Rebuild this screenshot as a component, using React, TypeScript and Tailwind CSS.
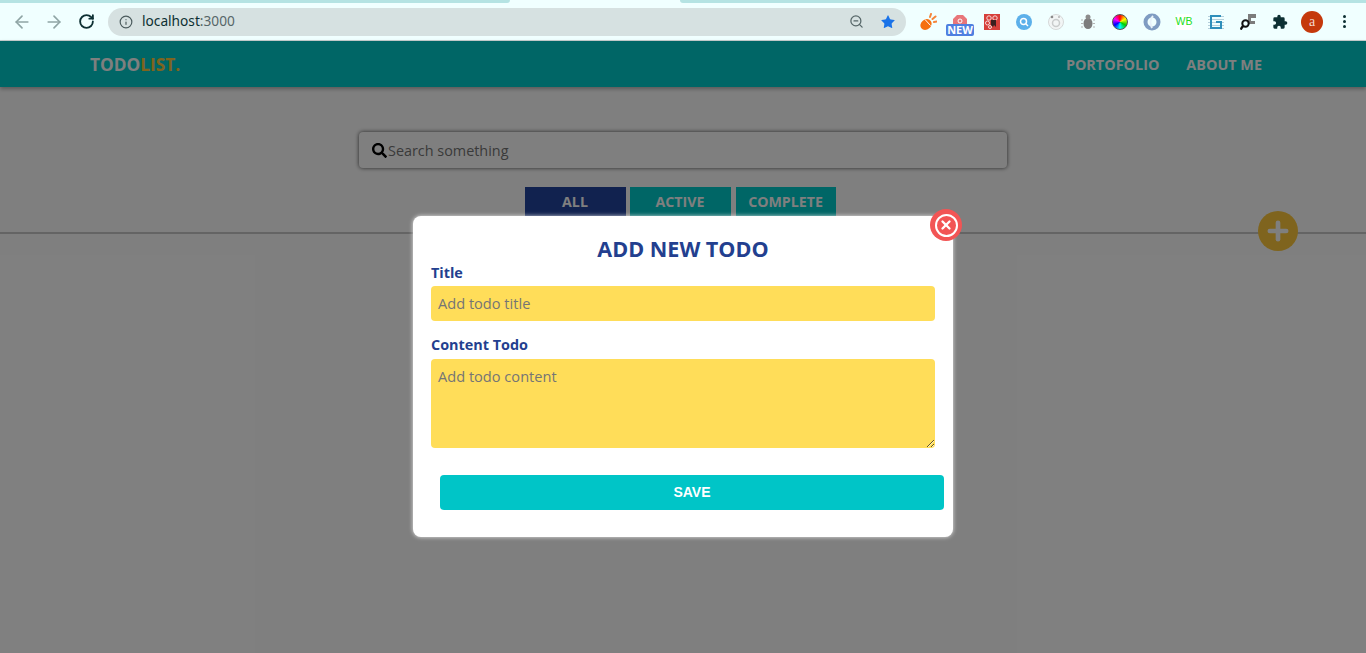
import { ArrowLeft, ArrowRight, Info, Plus, RotateCw, Star, X, ZoomOut } from "lucide-react";
import { FaSearch } from "react-icons/fa";

const FILTERS = [
  { label: "ALL", className: "w-[101px] bg-[#22449f]" },
  { label: "ACTIVE", className: "w-[101px] bg-[#00cccc]" },
  { label: "COMPLETE", className: "ml-px w-[100px] bg-[#00cccc]" },
];

function Extensions() {
  return (
    <div className="flex items-center pl-[6px]">
      <div className="flex w-8 justify-center">
        <svg width="18" height="18" viewBox="0 0 18 18">
          <ellipse cx="7" cy="11.5" rx="6" ry="5" transform="rotate(-40 7 11.5)" fill="#f5700f" />
          <path d="M6 6.5l5.5 6" stroke="#fff" strokeWidth="1" />
          <path d="M11 4l1-3M13.5 6l3-2.5M15 9l3-.5" stroke="#f5843a" strokeWidth="2" strokeLinecap="round" />
        </svg>
      </div>
      <div className="relative flex h-7 w-8 justify-center">
        <svg width="18" height="14" viewBox="0 0 18 14" className="mt-[6px]">
          <path d="M2 14V5l4-4h6l4 4v9z" fill="#e8767a" />
          <circle cx="9" cy="7" r="2" fill="none" stroke="#fff" />
        </svg>
        <span className="absolute left-[2px] top-[16px] flex h-[12px] w-[28px] items-center justify-center rounded-[2px] bg-[#4f7fe0] font-['Open_Sans',sans-serif] text-[11px] font-bold leading-none text-white">
          NEW
        </span>
      </div>
      <div className="flex w-8 justify-center">
        <svg width="16" height="16" viewBox="0 0 16 16">
          <rect width="16" height="16" fill="#d63f3a" />
          <circle cx="5" cy="4" r="2.2" fill="none" stroke="#f7d8d8" />
          <circle cx="11" cy="4" r="2.2" fill="none" stroke="#f7d8d8" />
          <circle cx="3.5" cy="9" r="2" fill="none" stroke="#f7d8d8" />
          <circle cx="6" cy="13" r="1.5" fill="none" stroke="#f7d8d8" />
          <path d="M7 6h5v7l-2-2-1 2-2-2z" fill="#3a2020" />
        </svg>
      </div>
      <div className="flex w-8 justify-center">
        <svg width="16" height="16" viewBox="0 0 16 16">
          <circle cx="8" cy="8" r="8" fill="#5cb0ea" />
          <circle cx="7.5" cy="7.5" r="3" fill="none" stroke="#fff" strokeWidth="1.5" />
          <path d="M10 10l2 2" stroke="#fff" strokeWidth="1.5" />
        </svg>
      </div>
      <div className="flex w-8 justify-center">
        <svg width="16" height="16" viewBox="0 0 16 16">
          <circle cx="8" cy="8" r="7.5" fill="#f2f5f5" stroke="#d5d8d8" />
          <circle cx="8" cy="9" r="3.5" fill="none" stroke="#c9cccc" strokeWidth="1.5" />
          <circle cx="4" cy="3" r="1.3" fill="#8a8a8a" />
          <circle cx="11" cy="3" r="1" fill="#b5b5b5" />
        </svg>
      </div>
      <div className="flex w-8 justify-center">
        <svg width="16" height="16" viewBox="0 0 16 16">
          <ellipse cx="8" cy="9.5" rx="4.5" ry="5.5" fill="#7d7d7d" />
          <circle cx="8" cy="3" r="2.5" fill="#8c8c8c" />
          <path d="M1 6h2M1 9.5h2M1 13h2M13 6h2M13 9.5h2M13 13h2" stroke="#b5b5b5" strokeWidth="1" />
        </svg>
      </div>
      <div className="flex w-8 justify-center">
        <div className="h-4 w-4 rounded-full border border-[#555] bg-[conic-gradient(#f00,#ff0,#0c0,#0ff,#00f,#f0f,#f00)]" />
      </div>
      <div className="flex w-8 justify-center">
        <svg width="18" height="18" viewBox="0 0 18 18">
          <circle cx="9" cy="9" r="6.5" fill="none" stroke="#7f9cc2" strokeWidth="4" />
          <path d="M10 3c-3 3-3 8-1 12" stroke="#e8f2fa" strokeWidth="2" fill="none" />
        </svg>
      </div>
      <div className="flex w-8 justify-center">
        <span className="flex h-4 w-4 items-center justify-center bg-white font-['Liberation_Sans',sans-serif] text-[10.5px] leading-none text-[#22e022]">
          WB
        </span>
      </div>
      <div className="flex w-8 justify-center">
        <svg width="16" height="16" viewBox="0 0 16 16" fill="none" stroke="#2f8fbb" strokeWidth="2">
          <path d="M0 2.5h16M0 5.5h16M0 8.5h16M0 11.5h16M0 14.5h16" stroke="#b5cfdb" strokeWidth="1" />
          <path d="M13 2H3v12h10V8H8" />
        </svg>
      </div>
      <div className="flex w-8 justify-center">
        <svg width="16" height="16" viewBox="0 0 16 16">
          <path d="M8 0h8v4h-5v3h4v3H8z" fill="#7c7c7c" />
          <circle cx="5.5" cy="9.5" r="3.2" fill="none" stroke="#111" strokeWidth="2" />
          <path d="M3 12l-2.5 3.5" stroke="#111" strokeWidth="2.4" />
        </svg>
      </div>
      <div className="flex w-8 justify-center">
        <svg width="16" height="16" viewBox="0 0 24 24" fill="#0d3033">
          <path d="M20.5 11H19V7a2 2 0 0 0-2-2h-4V3.5a2.5 2.5 0 0 0-5 0V5H4a2 2 0 0 0-2 2v3.8h1.5a2.7 2.7 0 0 1 0 5.4H2V20a2 2 0 0 0 2 2h3.8v-1.5a2.7 2.7 0 0 1 5.4 0V22H17a2 2 0 0 0 2-2v-4h1.5a2.5 2.5 0 0 0 0-5z" />
        </svg>
      </div>
      <div className="flex w-8 justify-center">
        <span className="flex h-[22px] w-[22px] items-center justify-center rounded-full bg-[#c5390c] font-['Liberation_Serif',serif] text-sm leading-none text-[#f3d9cf]">
          a
        </span>
      </div>
      <div className="flex w-8 flex-col items-center gap-[2px]">
        <span className="h-[3px] w-[3px] rounded-full bg-[#0d3033]" />
        <span className="h-[3px] w-[3px] rounded-full bg-[#0d3033]" />
        <span className="h-[3px] w-[3px] rounded-full bg-[#0d3033]" />
      </div>
    </div>
  );
}

function BrowserBar() {
  return (
    <div className="h-[41px] shrink-0 border-b border-[#c8d0d0] bg-[#f0ffff]">
      <div className="flex h-[3px] justify-between bg-[#f0ffff]">
        <div className="w-[510px] rounded-br-md bg-[#b5e3e3]" />
        <div className="w-[686px] rounded-bl-md bg-[#b5e3e3]" />
      </div>
      <div className="flex h-[37px] items-center">
        <div className="flex w-[108px] items-center pl-[12px]">
          <ArrowLeft size={20} strokeWidth={2} className="text-[#8fa5a5]" />
          <ArrowRight size={20} strokeWidth={2} className="ml-[12px] text-[#8fa5a5]" />
          <RotateCw size={17} strokeWidth={2.6} className="ml-[14px] text-[#0d3033]" />
        </div>
        <div className="flex h-[28px] w-[798px] items-center rounded-full bg-[#d6e1e1] pl-[11px] pr-[10px]">
          <Info size={14} className="text-[#4a5a5c]" />
          <span className="mb-px ml-[9px] font-['Noto_Sans',sans-serif] text-[13.7px] text-[#0d3033]">
            localhost<span className="text-[#566668]">:3000</span>
          </span>
          <ZoomOut size={15} className="ml-auto text-[#566668]" />
          <Star size={16} fill="#1a73e8" strokeWidth={0} className="ml-[16px]" />
        </div>
        <Extensions />
      </div>
    </div>
  );
}

function TodoPage() {
  return (
    <div className="relative flex-1 bg-white font-['Open_Sans',sans-serif]">
      <nav className="flex h-[46px] items-center justify-between bg-[#00cccc] pl-[90px] pr-[104px] pt-[2px] shadow-[0_2px_4px_rgba(0,0,0,0.3)]">
        <div className="text-[17.3px] font-bold leading-none text-white">
          TODO<span className="text-[#ffc93c]">LIST.</span>
        </div>
        <div className="flex gap-[27px] text-[14.4px] font-bold text-white">
          <span>PORTOFOLIO</span>
          <span>ABOUT ME</span>
        </div>
      </nav>
      <div className="flex flex-col items-center pt-[45px]">
        <div className="flex h-[36px] w-[648px] items-center rounded-[4px] pl-[13px] shadow-[0_0_4px_rgba(0,0,0,0.7)]">
          <FaSearch size={15} className="shrink-0 text-black" />
          <input
            placeholder="Search something"
            className="h-full flex-1 bg-transparent pl-px pt-px text-[14.4px] outline-none placeholder:text-[#757575]"
          />
        </div>
        <div className="mr-[6px] mt-[19px] flex gap-1">
          {FILTERS.map((filter) => (
            <button
              key={filter.label}
              type="button"
              className={`flex h-[30px] items-center justify-center text-[14.2px] font-bold text-white ${filter.className}`}
            >
              {filter.label}
            </button>
          ))}
        </div>
      </div>
      <div className="mt-[15px] h-[2px] bg-[#c8c8c8]" />
      <button
        type="button"
        className="absolute left-[1258px] top-[170px] flex h-10 w-10 items-center justify-center rounded-full bg-[#ffc93c] text-white"
      >
        <Plus size={28} strokeWidth={4} />
      </button>
    </div>
  );
}

function AddTodoModal() {
  return (
    <div className="absolute inset-x-0 bottom-0 top-[41px] flex justify-center bg-black/50 pt-[175px] font-['Open_Sans',sans-serif]">
      <div className="relative h-[321px] w-[540px] rounded-lg bg-white px-[18px] pt-[18px] shadow-[0_0_4px_rgba(255,255,255,0.8)]">
        <button
          type="button"
          className="absolute -right-[9px] -top-[7px] flex h-[32px] w-[32px] items-center justify-center rounded-full bg-[#f25555] text-white"
        >
          <span className="flex h-[23px] w-[23px] items-center justify-center rounded-full border-2 border-white">
            <X size={14} strokeWidth={4} />
          </span>
        </button>
        <h2 className="text-center text-[21.6px] font-bold leading-[29px] text-[#233f8f]">ADD NEW TODO</h2>
        <label className="block text-[14.4px] font-bold leading-[19px] text-[#233f8f]">Title</label>
        <input
          placeholder="Add todo title"
          className="mt-[4px] block h-[35px] w-[504px] rounded-[4px] bg-[#ffdd59] px-[7px] pb-px text-[14.6px] outline-none placeholder:text-[#757575]"
        />
        <label className="mt-[14px] block text-[14.4px] font-bold leading-[19px] text-[#233f8f]">Content Todo</label>
        <textarea
          placeholder="Add todo content"
          className="mt-[5px] block h-[89px] w-[504px] rounded-[4px] bg-[#ffdd59] px-[7px] py-[7px] text-[14.6px] outline-none placeholder:text-[#757575]"
        />
        <button
          type="button"
          className="ml-[9px] mt-[27px] block h-[35px] w-[504px] rounded-[4px] bg-[#00c5c7] pb-px font-['Liberation_Sans',sans-serif] text-sm font-bold text-white"
        >
          SAVE
        </button>
      </div>
    </div>
  );
}

export default function App() {
  return (
    <div className="relative flex h-[653px] w-[1366px] flex-col overflow-hidden">
      <BrowserBar />
      <TodoPage />
      <AddTodoModal />
    </div>
  );
}
